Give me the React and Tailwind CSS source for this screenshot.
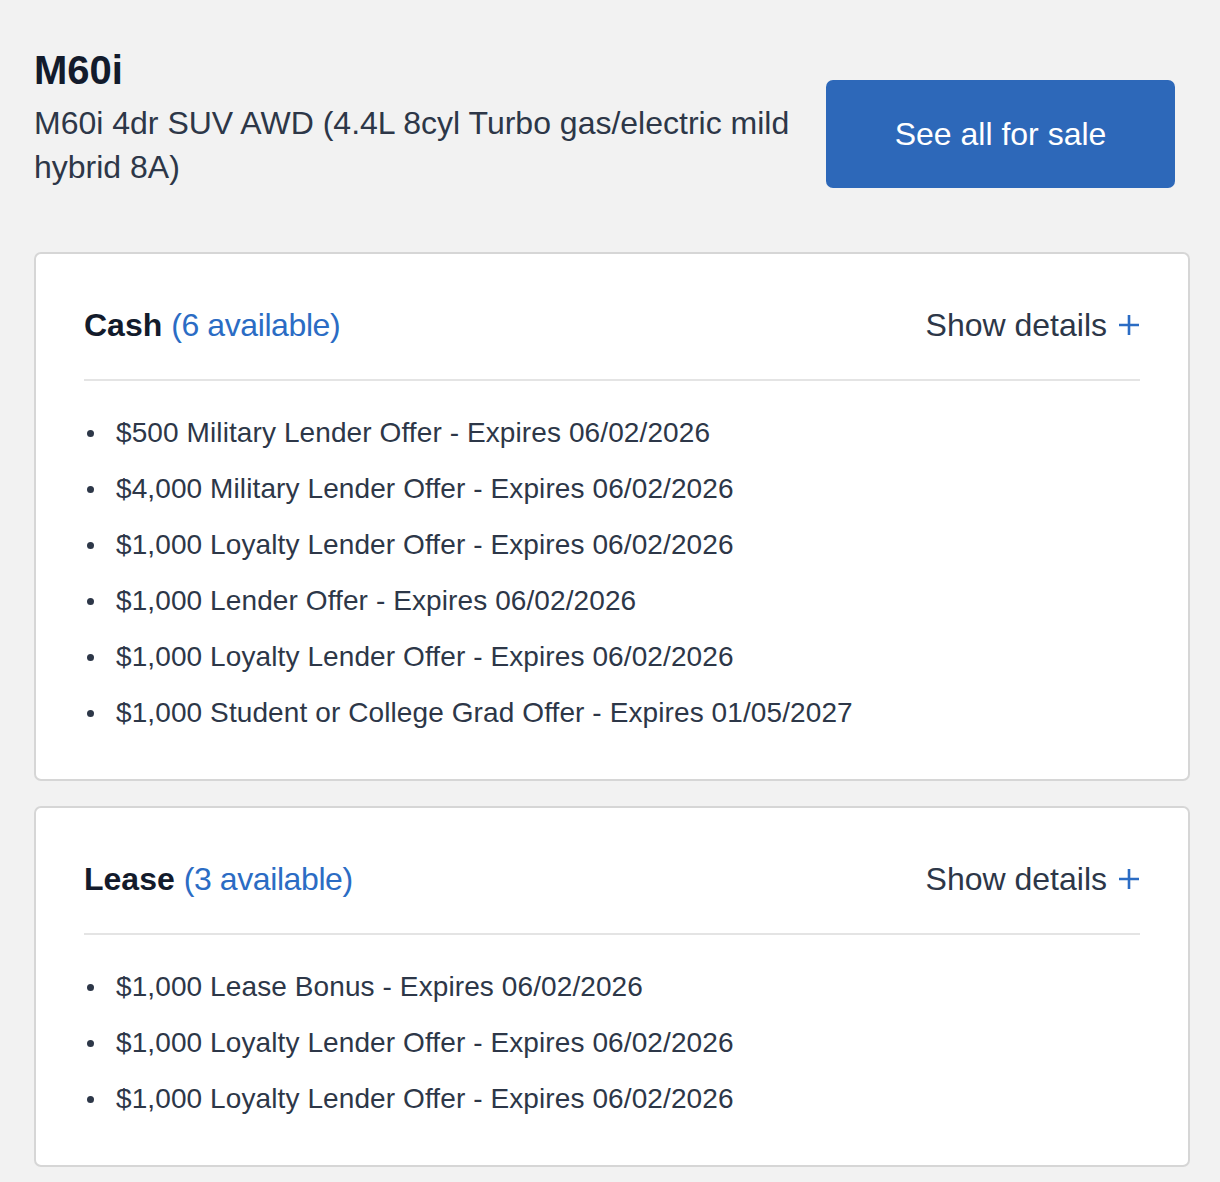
import React from 'react';

// Incentive groups shown under the trim header
const groups = [
  {
    name: 'Cash',
    count: 6,
    offers: [
      '$500 Military Lender Offer - Expires 06/02/2026',
      '$4,000 Military Lender Offer - Expires 06/02/2026',
      '$1,000 Loyalty Lender Offer - Expires 06/02/2026',
      '$1,000 Lender Offer - Expires 06/02/2026',
      '$1,000 Loyalty Lender Offer - Expires 06/02/2026',
      '$1,000 Student or College Grad Offer - Expires 01/05/2027',
    ],
  },
  {
    name: 'Lease',
    count: 3,
    offers: [
      '$1,000 Lease Bonus - Expires 06/02/2026',
      '$1,000 Loyalty Lender Offer - Expires 06/02/2026',
      '$1,000 Loyalty Lender Offer - Expires 06/02/2026',
    ],
  },
];

const PlusIcon = () => (
  <svg width="22" height="22" viewBox="0 0 22 22" className="shrink-0">
    <path d="M11 1v20M1 11h20" stroke="#2b6cc4" strokeWidth="2.6" fill="none" />
  </svg>
);

const OfferCard = ({ group }) => (
  <div className="bg-white border-2 border-[#d6d6d6] rounded-[7px] px-[48px]">
    {/* Card header */}
    <div className="flex items-center justify-between pt-[50px] pb-[33px] border-b-2 border-[#e4e4e4]">
      <div className="text-[32px] leading-[42px]">
        <span className="font-bold text-[#131b2c]">{group.name}</span>{' '}
        <span className="text-[#2b6cc4] tracking-[-0.4px]">({group.count} available)</span>
      </div>
      <button className="flex items-center gap-[11px] text-[32px] leading-[42px] text-[#2d3748]">
        Show details
        <PlusIcon />
      </button>
    </div>

    {/* Offer list */}
    <ul className="pt-[24px] pb-[38px]">
      {group.offers.map((offer, i) => (
        <li key={i} className="flex items-center h-[56px] text-[28px] tracking-[0.1px] text-[#2d3748]">
          <span className="ml-[3px] mr-[22px] w-[7px] h-[7px] rounded-full bg-[#2d3748] shrink-0"></span>
          {offer}
        </li>
      ))}
    </ul>
  </div>
);

export default function App() {
  return (
    <div
      className="min-h-[1182px] bg-[#f2f2f2] pl-[34px] pr-[30px] pt-[46px]"
      style={{ fontFamily: '"Liberation Sans", Arial, Helvetica, sans-serif' }}
    >
      {/* Trim header */}
      <div className="flex items-start">
        <div className="flex-1 min-w-0">
          <h1 className="text-[40px] leading-[48px] font-bold text-[#131b2c]">M60i</h1>
          <p className="mt-[7px] text-[32px] leading-[44px] text-[#2d3748]">
            M60i 4dr SUV AWD (4.4L 8cyl Turbo gas/electric mild hybrid 8A)
          </p>
        </div>
        <button className="shrink-0 ml-[24px] mr-[15px] mt-[34px] w-[349px] h-[108px] rounded-[7px] bg-[#2d68b9] text-white text-[32px]">
          See all for sale
        </button>
      </div>

      {/* Incentive cards */}
      <div className="mt-[63px] flex flex-col gap-[25px]">
        {groups.map((g) => (
          <OfferCard key={g.name} group={g} />
        ))}
      </div>
    </div>
  );
}
